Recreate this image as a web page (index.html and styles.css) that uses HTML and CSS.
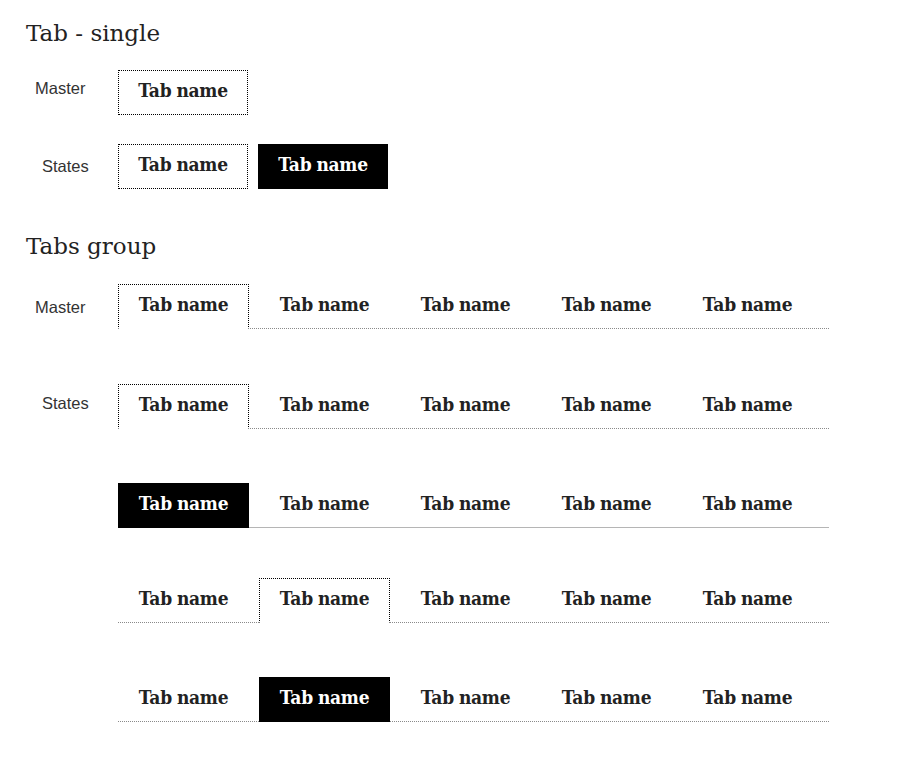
FILE: index.html
```html
<!DOCTYPE html>
<html lang="en">
<head>
<meta charset="utf-8">
<title>Tabs</title>
<link rel="stylesheet" href="styles.css">
</head>
<body>
<main class="page">
  <h2 class="heading heading--first">Tab - single</h2>

  <div class="row row--s1">
    <div class="label label--master label--s1">Master</div>
    <div class="singles">
      <div class="tab tab--outline tab--single">Tab name</div>
    </div>
  </div>

  <div class="row row--s2">
    <div class="label label--states label--s2">States</div>
    <div class="singles">
      <div class="tab tab--outline tab--single">Tab name</div>
      <div class="tab tab--filled tab--single">Tab name</div>
    </div>
  </div>

  <h2 class="heading heading--second">Tabs group</h2>

  <div class="row row--g1">
    <div class="label label--master label--g1">Master</div>
    <div class="tabs tabs--dotted">
      <div class="tab tab--outline">Tab name</div>
      <div class="tab">Tab name</div>
      <div class="tab">Tab name</div>
      <div class="tab">Tab name</div>
      <div class="tab">Tab name</div>
    </div>
  </div>

  <div class="row row--g2">
    <div class="label label--states label--g2">States</div>
    <div class="tabs tabs--dotted">
      <div class="tab tab--outline">Tab name</div>
      <div class="tab">Tab name</div>
      <div class="tab">Tab name</div>
      <div class="tab">Tab name</div>
      <div class="tab">Tab name</div>
    </div>
  </div>

  <div class="row row--g3">
    <div class="label"></div>
    <div class="tabs tabs--solid">
      <div class="tab tab--filled">Tab name</div>
      <div class="tab">Tab name</div>
      <div class="tab">Tab name</div>
      <div class="tab">Tab name</div>
      <div class="tab">Tab name</div>
    </div>
  </div>

  <div class="row row--g4">
    <div class="label"></div>
    <div class="tabs tabs--dotted">
      <div class="tab">Tab name</div>
      <div class="tab tab--outline">Tab name</div>
      <div class="tab">Tab name</div>
      <div class="tab">Tab name</div>
      <div class="tab">Tab name</div>
    </div>
  </div>

  <div class="row row--g5">
    <div class="label"></div>
    <div class="tabs tabs--dotted">
      <div class="tab">Tab name</div>
      <div class="tab tab--filled">Tab name</div>
      <div class="tab">Tab name</div>
      <div class="tab">Tab name</div>
      <div class="tab">Tab name</div>
    </div>
  </div>
</main>
</body>
</html>
```

FILE: styles.css
```css
* { box-sizing: border-box; }

html, body {
  margin: 0;
  padding: 0;
  background: #ffffff;
}

.page {
  padding: 17px 26px 40px 26px;
}

.heading {
  margin: 0;
  font-family: "DejaVu Serif", "Liberation Serif", serif;
  font-weight: 400;
  font-size: 23px;
  line-height: 32px;
  color: #222;
}

.heading--second { margin-top: 41px; }

.row {
  display: flex;
  align-items: flex-start;
}

.row--s1 { margin-top: 21px; }
.row--s2 { margin-top: 29px; }
.row--g1 { margin-top: 22px; }
.row--g2 { margin-top: 55px; }
.row--g3 { margin-top: 54px; }
.row--g4 { margin-top: 50px; }
.row--g5 { margin-top: 54px; }

.label {
  flex: 0 0 92px;
  font-family: "Liberation Sans", Arial, sans-serif;
  font-size: 16.5px;
  line-height: 20px;
  color: #333;
}

.label--master { padding-left: 9px; }
.label--states { padding-left: 16px; }
.label--s1 { padding-top: 8px; }
.label--s2 { padding-top: 12px; }
.label--g1 { padding-top: 13px; }
.label--g2 { padding-top: 9px; }

.singles {
  display: flex;
  gap: 10px;
}

.tabs {
  display: flex;
  gap: 10px;
  width: 711px;
}

.tabs--dotted { border-bottom: 1px dotted #8a8a8a; }
.tabs--solid { border-bottom: 1px solid #b5b5b5; }

.tab {
  flex: 0 0 131px;
  width: 131px;
  height: 45px;
  margin-bottom: -1px;
  padding-bottom: 5px;
  border: 1px solid transparent;
  display: flex;
  align-items: center;
  justify-content: center;
  font-family: "DejaVu Serif Condensed", "Liberation Serif", serif;
  font-weight: 700;
  font-size: 19px;
  line-height: 23px;
  letter-spacing: -0.3px;
  word-spacing: -0.5px;
  color: #222;
  white-space: nowrap;
}

.tab--single {
  flex-basis: 130px;
  width: 130px;
  margin-bottom: 0;
}

.tab--outline {
  border: 1px dotted #000;
  background: #fff;
}

.tabs .tab--outline { border-bottom: 1px solid #fff; }

.tab--filled {
  background: #000;
  border-color: #000;
  color: #fff;
}
```
